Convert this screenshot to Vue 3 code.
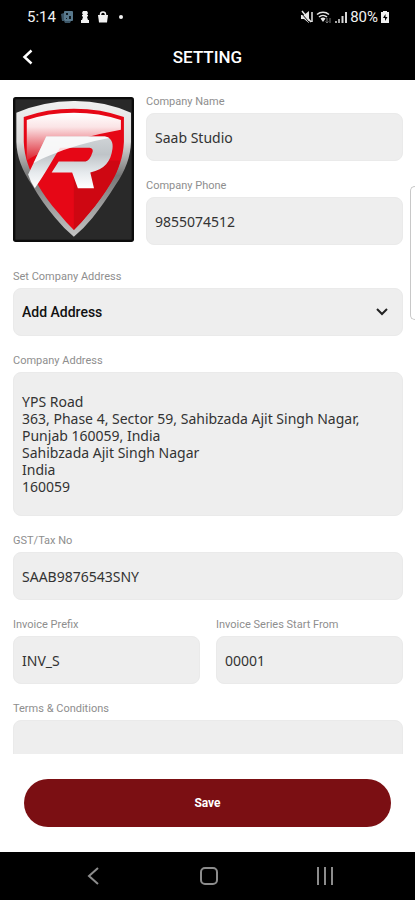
<template>
  <div class="screen">
    <header class="top">
      <div class="status-bar">
        <div class="status-left">
          <span class="clock">5:14</span>
          <svg class="status-icon" viewBox="0 0 14 14">
            <path d="M1 4l3-1v8H2z" fill="#3c5566" />
            <rect x="4" y="1" width="9" height="10" rx="1" fill="#58788c" />
            <path d="M4 11l7 0-1 2H5z" fill="#3c5566" />
            <path d="M6 3h2v2H6zM9 6h2v3H9zM6 8h1v1H6z" fill="#101a20" />
          </svg>
          <svg class="status-icon" viewBox="0 0 14 14">
            <path d="M5 1h4l1 2-1 2h1v1L9 7l1 3h1v3H3v-3h1l1-3-1-1V5h1L4 3z" fill="#f2f2f2" />
          </svg>
          <svg class="status-icon" viewBox="0 0 14 14">
            <path d="M2 5h10l-1 7.500H3z" fill="#f2f2f2" />
            <path d="M4.500 6V4.500a2.500 2.500 0 0 1 5 0V6" fill="none" stroke="#f2f2f2" stroke-width="1.500" />
          </svg>
          <svg class="status-icon" viewBox="0 0 14 14">
            <circle cx="7" cy="7" r="2" fill="#f2f2f2" />
          </svg>
        </div>
        <div class="status-right">
          <svg class="status-icon" viewBox="0 0 14 14">
            <path d="M1 5h3l5-4v12L4 9H1z" fill="#e6e6e6" />
            <path d="M1 3l8 9" stroke="#000" />
            <path d="M2 1l9 11M12 2v10" stroke="#e6e6e6" stroke-width="1.500" />
          </svg>
          <svg class="status-icon wifi" viewBox="0 0 16 14">
            <path d="M1 4.500a9 9 0 0 1 12 0M3 7a6 6 0 0 1 8 0" fill="none" stroke="#e6e6e6" stroke-width="1.500" />
            <path d="M4.500 8.500a4 4 0 0 1 5 0L7 12z" fill="#e6e6e6" />
            <path d="M11 8v5M9.500 11.500l1.500 1.500 1.500-1.500M14 13V8" fill="none" stroke="#777" />
          </svg>
          <svg class="status-icon" viewBox="0 0 14 14">
            <path d="M2 13v-2M5 13V9" stroke="#a8a8a8" stroke-width="2" />
            <path d="M8.500 13V6M12 13V2" stroke="#d8d8d8" stroke-width="2" />
          </svg>
          <span class="battery">80%</span>
          <svg class="battery-icon" viewBox="0 0 10 14">
            <path d="M3 1h4v1h2v11H1V2h2z" fill="#f2f2f2" />
            <path d="M5.500 4L3 8h2v3l2.500-4h-2z" fill="#000" />
          </svg>
        </div>
      </div>
      <div class="title-bar">
        <button type="button" class="icon-button" aria-label="Back">
          <svg class="back-icon" viewBox="0 0 12 16">
            <path d="M9.500 1.500L2.500 8l7 6.500" fill="none" stroke="#fff" stroke-width="2.500" />
          </svg>
        </button>
        <h1>SETTING</h1>
      </div>
    </header>

    <form id="settings" class="form" @submit.prevent>
      <div class="company">
        <svg class="logo" viewBox="0 0 360 434" preserveAspectRatio="none" role="img" aria-label="Company logo">
          <defs>
            <linearGradient id="rim" x1="0" y1="0" x2="0" y2="1">
              <stop offset="0" stop-color="#f0f0f0" />
              <stop offset="0.300" stop-color="#dcdcdc" />
              <stop offset="0.550" stop-color="#777" />
              <stop offset="1" stop-color="#c4c4c4" />
            </linearGradient>
            <linearGradient id="gloss" x1="0" y1="0" x2="0" y2="1">
              <stop offset="0" stop-color="#fff" />
              <stop offset="0.300" stop-color="#fbe4e6" />
              <stop offset="1" stop-color="#dc1f2b" />
            </linearGradient>
            <linearGradient id="letter" x1="0" y1="0" x2="0" y2="1">
              <stop offset="0" stop-color="#d0d4d7" />
              <stop offset="0.350" stop-color="#bfc4c8" />
              <stop offset="0.700" stop-color="#e6eaed" />
              <stop offset="1" stop-color="#fff" />
            </linearGradient>
          </defs>
          <rect width="360" height="434" rx="8" fill="#0c0c0c" />
          <rect x="7" y="7" width="346" height="420" fill="#292929" />
          <path
            d="M10 47Q90 13 180 12T351 47V135C350 180 334 222 306 262Q270 320 236 362Q212 392 181 418Q150 392 126 362Q88 318 56 262C28 222 11 180 10 135Z"
            fill="url(#rim)"
          />
          <path
            d="M32 60Q99 35 181 35T330 60V135C328 180 314 220 292 256Q262 306 228 346Q206 374 181 398Q156 374 134 346Q98 306 70 256C48 220 34 180 32 135Z"
            fill="#e60716"
          />
          <path d="M181 190H319Q311 224 292 256Q262 306 228 346Q206 374 181 398Z" fill="#ce0712" />
          <path d="M41 69Q104 47 181 47T321 69V98Q205 119 112 155Q65 174 41 190Z" fill="url(#gloss)" />
          <path
            d="M99 118H273C291 120 299 135 296 155C291 194 273 216 230 226L241 273H193L176 226H115L136 193H216Q229 190 237 164Q239 153 228 152H140C120 184 97 227 65 273Q52 254 45 232Z"
            fill="url(#letter)"
          />
          <path d="M99 118H273Q281 119 286 123Q198 139 111 174Q78 187 61 198Z" fill="#fff" opacity="0.850" />
        </svg>
        <div class="stack">
          <div class="field">
            <label for="name">Company Name</label>
            <input id="name" v-model="form.name" type="text" class="control" />
          </div>
          <div class="field">
            <label for="phone">Company Phone</label>
            <input id="phone" v-model="form.phone" type="tel" class="control" />
          </div>
        </div>
      </div>

      <div class="stack">
        <div class="field">
          <label for="set-address">Set Company Address</label>
          <div class="select-wrap">
            <select id="set-address" v-model="form.addressMode" class="control select">
              <option>Add Address</option>
            </select>
            <svg class="chevron" viewBox="0 0 14 10">
              <path d="M2 2l5 5 5-5" fill="none" stroke="#222" stroke-width="2" />
            </svg>
          </div>
        </div>
        <div class="field">
          <label for="address">Company Address</label>
          <textarea id="address" v-model="form.address" class="control area"></textarea>
        </div>
        <div class="field">
          <label for="tax">GST/Tax No</label>
          <input id="tax" v-model="form.tax" type="text" class="control" />
        </div>
        <div class="pair">
          <div class="field">
            <label for="prefix">Invoice Prefix</label>
            <input id="prefix" v-model="form.prefix" type="text" class="control" />
          </div>
          <div class="field">
            <label for="series">Invoice Series Start From</label>
            <input id="series" v-model="form.series" type="text" class="control" />
          </div>
        </div>
        <div class="field">
          <label for="terms">Terms &amp; Conditions</label>
          <textarea id="terms" v-model="form.terms" class="control area"></textarea>
        </div>
      </div>
    </form>

    <div class="actions">
      <button type="submit" form="settings" class="save">Save</button>
    </div>

    <nav class="nav-bar">
      <button type="button" class="icon-button" aria-label="Back">
        <svg class="nav-icon" viewBox="0 0 20 20">
          <path d="M14 2L5 10l9 8" fill="none" stroke="#8c8c8c" stroke-width="2" />
        </svg>
      </button>
      <button type="button" class="icon-button" aria-label="Home">
        <svg class="nav-icon" viewBox="0 0 20 20">
          <rect x="2" y="2" width="16" height="16" rx="4" fill="none" stroke="#8c8c8c" stroke-width="2" />
        </svg>
      </button>
      <button type="button" class="icon-button" aria-label="Recent apps">
        <svg class="nav-icon" viewBox="0 0 20 20">
          <path d="M3 1v18M10 1v18M17 1v18" stroke="#8c8c8c" stroke-width="2" />
        </svg>
      </button>
    </nav>

    <div class="edge-handle"></div>
  </div>
</template>

<script setup>
import { reactive } from 'vue'

const form = reactive({
  name: 'Saab Studio',
  phone: '9855074512',
  addressMode: 'Add Address',
  address: [
    'YPS Road',
    '363, Phase 4, Sector 59, Sahibzada Ajit Singh Nagar, Punjab 160059, India',
    'Sahibzada Ajit Singh Nagar',
    'India',
    '160059'
  ].join('\n'),
  tax: 'SAAB9876543SNY',
  prefix: 'INV_S',
  series: '00001',
  terms: ''
})
</script>

<style>
body {
  margin: 0;
}
</style>

<style scoped>
.screen {
  position: relative;
  display: flex;
  flex-direction: column;
  height: 100vh;
  overflow: hidden;
  background: #fff;
  font-family: Roboto, sans-serif;
}

.screen * {
  box-sizing: border-box;
}

.top {
  background: #000;
  color: #fff;
  flex: none;
}

.status-bar {
  display: flex;
  justify-content: space-between;
  align-items: center;
  height: 34px;
  padding: 0 25px 0 27px;
}

.status-left,
.status-right {
  display: flex;
  align-items: center;
}

.status-left {
  gap: 4px;
}

.status-right {
  gap: 2px;
}

.clock,
.battery {
  font-size: 15px;
  line-height: 16px;
  color: #f2f2f2;
}

.status-icon {
  width: 14px;
  height: 14px;
}

.wifi {
  width: 16px;
}

.battery-icon {
  width: 10px;
  height: 14px;
}

.title-bar {
  display: grid;
  grid-template-columns: 40px 1fr 40px;
  align-items: center;
  height: 46px;
  padding: 0 8px;
}

.title-bar h1 {
  margin: 0;
  font-size: 17px;
  line-height: 20px;
  font-weight: 500;
  text-align: center;
}

.icon-button {
  display: flex;
  align-items: center;
  justify-content: center;
  padding: 0;
  border: none;
  background: none;
  cursor: pointer;
}

.back-icon {
  width: 12px;
  height: 16px;
}

.form {
  flex: 1;
  min-height: 0;
  overflow-y: auto;
  scrollbar-width: none;
  display: flex;
  flex-direction: column;
  gap: 24px;
  padding: 14px 12px 0 13px;
}

.company {
  display: flex;
  gap: 12px;
}

.company .stack {
  flex: 1;
}

.logo {
  flex: none;
  width: 121px;
  height: 145px;
  margin-top: 3px;
}

.stack {
  display: flex;
  flex-direction: column;
  gap: 17px;
  min-width: 0;
}

.field {
  display: flex;
  flex-direction: column;
  gap: 3px;
  flex: 1;
  min-width: 0;
}

.pair {
  display: flex;
  gap: 16px;
}

label {
  font-size: 11px;
  line-height: 16px;
  color: #8e8e8e;
}

.control {
  display: block;
  width: 100%;
  height: 48px;
  margin: 0;
  padding: 0 8px;
  border: 1px solid #eaeaea;
  border-radius: 8px;
  outline: none;
  background: #eee;
  color: #333;
  font-family: "Noto Sans", sans-serif;
  font-size: 14px;
  line-height: 17px;
}

.area {
  height: 144px;
  padding: 20px 8px;
  resize: none;
  overflow: hidden;
}

.select-wrap {
  display: grid;
  align-items: center;
}

.select-wrap > * {
  grid-area: 1 / 1;
}

.select {
  appearance: none;
  color: #111;
  font-family: Roboto, sans-serif;
  font-weight: 500;
}

.chevron {
  justify-self: end;
  width: 14px;
  height: 10px;
  margin-right: 14px;
  pointer-events: none;
}

.actions {
  flex: none;
  padding: 25px 24px;
}

.save {
  display: block;
  width: 100%;
  height: 48px;
  border: none;
  border-radius: 24px;
  background: #7b0f13;
  color: #fff;
  font-family: Roboto, sans-serif;
  font-size: 12px;
  font-weight: 700;
  cursor: pointer;
}

.nav-bar {
  flex: none;
  display: flex;
  justify-content: space-around;
  align-items: center;
  height: 48px;
  padding: 0 32px 0 36px;
  background: #000;
}

.nav-icon {
  width: 20px;
  height: 20px;
}

.edge-handle {
  position: absolute;
  top: 186px;
  right: 0;
  width: 5px;
  height: 134px;
  border: 1px solid #c8c8c8;
  border-right: none;
  border-radius: 6px 0 0 6px;
  background: #fff;
}
</style>
